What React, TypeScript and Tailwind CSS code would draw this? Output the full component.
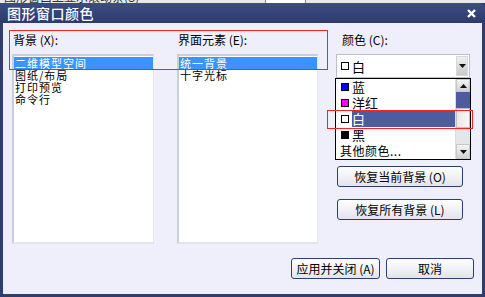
import React from "react";

const FONT = { fontFamily: '"Noto Sans CJK SC", "Noto Sans", sans-serif' };

const BG_ITEMS = ["二维模型空间", "图纸/布局", "打印预览", "命令行"];
const UI_ITEMS = ["统一背景", "十字光标"];

const COLORS = [
    { name: "蓝", swatch: "bg-[#0000ff]" },
    { name: "洋红", swatch: "bg-[#ff00ff]" },
    { name: "白", swatch: "bg-white", selected: true },
    { name: "黑", swatch: "bg-black" },
];

function ListBox({ items }: { items: string[] }) {
    return (
        <div className="h-[190px] border-t-2 border-l-2 border-[#c9cfd6] border-r border-b-2 border-r-[#e4e6e4] border-b-[#e2e5e2] bg-white pt-px">
            {items.map((it, i) => (
                <div
                    key={it}
                    className={`h-[12px] text-[11px] leading-[12px] tracking-[1px] pl-px whitespace-nowrap ${i === 0 ? "bg-[#3b93fb] text-white" : "text-black"}`}
                >
                    {it}
                </div>
            ))}
        </div>
    );
}

function Arrow({ up }: { up?: boolean }) {
    return (
        <svg width="7" height="4" viewBox="0 0 7 4">
            <path d={up ? "M0 4 L3.5 0 L7 4 Z" : "M0 0 L7 0 L3.5 4 Z"} fill="#111" />
        </svg>
    );
}

function Btn({ label, w }: { label: string; w: string }) {
    return (
        <div className={`${w} h-[21px] rounded-[3px] border border-[#2a4170] bg-gradient-to-b from-white to-[#e3e4ec] flex items-center justify-center text-[12px] text-black`}>
            {label}
        </div>
    );
}

export default function App() {
    return (
        <div className="w-[485px] h-[297px] overflow-hidden bg-[#2f3d6f]" style={FONT}>
            {/* window behind */}
            <div className="h-[3px] overflow-hidden bg-[#e9e9e9] flex">
                <div className="-mt-[9px] pl-[4px] text-[12px] leading-[12px] text-[#333] w-[265px]">图形窗口上显示滚动条(S)</div>
                <div className="w-[40px] border-l border-[#888] bg-white" />
                <div className="w-[130px] border-l border-[#888]" />
            </div>
            <div className="flex h-[294px] flex-col rounded-tr-[6px] bg-[#2f3d70]">
                {/* title bar */}
                <div className="h-[20px] flex items-center justify-between pl-[7px] pr-[9px] bg-gradient-to-b from-[#3d4d84] to-[#2d3b6c] rounded-tr-[6px]">
                    <span className="text-[14px] leading-[14px] text-white font-medium tracking-[0.5px]">图形窗口颜色</span>
                    <svg width="9" height="9" viewBox="0 0 9 9">
                        <path d="M1 1 L8 8 M8 1 L1 8" stroke="white" strokeWidth="2.4" />
                    </svg>
                </div>
                {/* body */}
                <div className="relative flex-1 mx-[3px] mb-[3px] bg-[#efeffb] pt-[11px] pl-[9px] pr-[8px] flex flex-col">
                    <div className="flex">
                        <div className="w-[142px]">
                            <div className="h-[20px] text-[12px] leading-[12px] pl-px">背景 (X):</div>
                            <ListBox items={BG_ITEMS} />
                        </div>
                        <div className="w-[141px] ml-[23px]">
                            <div className="h-[20px] text-[12px] leading-[12px] pl-px">界面元素 (E):</div>
                            <ListBox items={UI_ITEMS} />
                        </div>
                        <div className="w-[134px] ml-[18px] relative">
                            <div className="h-[20px] text-[12px] leading-[12px] pl-[6px]">颜色 (C):</div>
                            <div className="h-[24px] border border-[#b9c0cc] bg-white flex items-center pl-[4px] pr-px">
                                <span className="w-[8px] h-[8px] border border-black bg-white" />
                                <span className="ml-[3px] text-[13px] leading-[13px]">白</span>
                                <div className="ml-auto w-[12px] h-[20px] bg-gradient-to-b from-[#f0f0f0] to-[#c9c9c9] border border-[#d8d8d8] flex items-center justify-center">
                                    <Arrow />
                                </div>
                            </div>
                            {/* open dropdown */}
                            <div className="absolute left-[-1px] top-[44px] w-[136px] h-[82px] border border-black bg-white flex z-10">
                                <div className="flex-1">
                                    {COLORS.map((c) => (
                                        <div key={c.name} className="h-[16px] flex items-center pl-[5px]">
                                            <span className={`w-[8px] h-[8px] border border-black ${c.swatch}`} />
                                            <span className={`ml-[3px] h-[16px] flex-1 text-[13px] leading-[16px] ${c.selected ? "bg-[#4c5c9e] text-white" : "text-black"}`}>
                                                {c.name}
                                            </span>
                                        </div>
                                    ))}
                                    <div className="h-[16px] pl-[4px] text-[12px] leading-[16px] tracking-[0.5px]">其他颜色...</div>
                                </div>
                                <div className="w-[15px] flex flex-col border-l border-[#dcdcdc]">
                                    <div className="h-[13px] bg-gradient-to-b from-[#f4f4f4] to-[#d0d0d0] border border-[#c8c8c8] flex items-center justify-center"><Arrow up /></div>
                                    <div className="h-[16px] bg-[#4c5c9e]" />
                                    <div className="h-[20px] bg-gradient-to-r from-[#e8e8e8] to-[#f8f8f8] border border-[#c0c0c0]" />
                                    <div className="flex-1 bg-[#e6e6e6]" />
                                    <div className="h-[15px] bg-gradient-to-b from-[#f4f4f4] to-[#d0d0d0] border border-[#c8c8c8] flex items-center justify-center"><Arrow /></div>
                                </div>
                            </div>
                            <div className="mt-[88px] flex flex-col gap-[12px] pl-px">
                                <Btn label="恢复当前背景 (O)" w="w-[126px]" />
                                <Btn label="恢复所有背景 (L)" w="w-[126px]" />
                            </div>
                        </div>
                    </div>
                    <div className="mt-[14px] flex justify-end gap-[6px]">
                        <Btn label="应用并关闭 (A)" w="w-[89px]" />
                        <Btn label="取消" w="w-[88px]" />
                    </div>
                    {/* red highlight boxes */}
                    <div className="absolute left-[6px] top-[7px] w-[319px] h-[40px] border border-[#ff2020] pointer-events-none" />
                    <div className="absolute left-[324px] top-[87px] w-[146px] h-[19px] border border-[#ff2020] z-20 pointer-events-none" />
                </div>
            </div>
        </div>
    );
}
